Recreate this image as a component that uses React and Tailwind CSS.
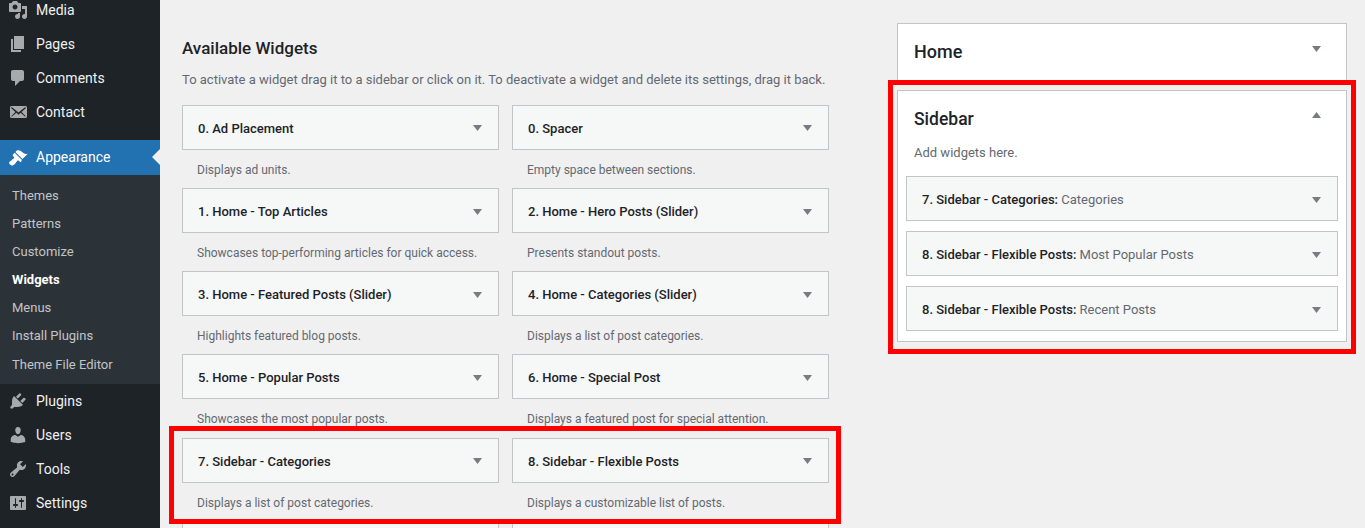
const icons = {
  media: "M13 11V4c0-.55-.45-1-1-1h-1.67L9 1H5L3.67 3H2c-.55 0-1 .45-1 1v7c0 .55.45 1 1 1h10c.55 0 1-.45 1-1zM7 4.5c1.38 0 2.5 1.12 2.5 2.5S8.38 9.5 7 9.5 4.5 8.38 4.5 7 5.62 4.5 7 4.5zM14 6h5v10.5c0 1.38-1.12 2.5-2.5 2.5S14 17.88 14 16.5s1.12-2.5 2.5-2.5c.17 0 .34.02.5.05V9h-3V6zm-4 8.05V13h2v3.5c0 1.38-1.12 2.5-2.5 2.5S7 17.88 7 16.5 8.12 14 9.5 14c.17 0 .34.02.5.05z",
  pages: "M6 15V2h10v13H6zm-1 1h8v2H3V5h2v11z",
  comments: "M5 2h9c1.1 0 2 .9 2 2v7c0 1.1-.9 2-2 2h-2l-5 5v-5H5c-1.1 0-2-.9-2-2V4c0-1.1.9-2 2-2z",
  contact: "M19 14.5v-9c0-.83-.67-1.5-1.5-1.5H3.49c-.83 0-1.5.67-1.5 1.5v9c0 .83.67 1.5 1.5 1.5H17.5c.83 0 1.5-.67 1.5-1.5zm-1.31-9.11c.33.33.15.67-.03.84L13.6 9.95l3.9 4.06c.12.14.2.36.06.51-.13.16-.43.15-.56.05l-4.37-3.73-2.14 1.95-2.13-1.95-4.37 3.73c-.13.1-.43.11-.56-.05-.14-.15-.06-.37.06-.51l3.9-4.06-4.06-3.72c-.18-.17-.36-.51-.03-.84s.67-.17.95.07l6.24 5.04 6.25-5.04c.28-.24.62-.4.95-.07z",
  appearance: "M14.48 11.06L7.41 3.99l1.5-1.5c.5-.56 2.3-.47 3.51.32 1.21.8 1.43 1.28 2.91 2.1 1.18.64 2.45 1.26 4.45.85zm-.71.71L6.7 4.7 4.93 6.47c-.39.39-.39 1.02 0 1.41l1.06 1.06c.39.39.39 1.03 0 1.42-.6.6-1.43 1.11-2.21 1.69-.35.26-.7.53-1.01.84C1.43 13.23.4 14.89 2.12 16.6c1.72 1.72 3.36.69 4.7-.65.31-.31.58-.66.84-1.01.58-.78 1.09-1.61 1.69-2.21.39-.39 1.03-.39 1.42 0l1.06 1.06c.39.39 1.02.39 1.41 0z",
  plugins: "M13.11 4.36L9.87 7.6 8 5.73l3.24-3.24c.35-.34 1.05-.2 1.56.32.52.51.66 1.21.31 1.55zm-8 1.77l.91-1.12 9.01 9.01-1.19.84c-.71.71-2.63 1.16-3.82 1.16H6.14L4.9 17.26c-.59.59-1.54.59-2.12 0-.59-.58-.59-1.53 0-2.12l1.24-1.24v-3.88c0-1.13.4-3.19 1.09-3.89zm7.26 3.97l3.24-3.24c.34-.35 1.04-.21 1.55.31.52.51.66 1.21.31 1.55l-3.24 3.25z",
  users: "M10 9.25c-2.27 0-2.73-3.44-2.73-3.44C7 4.02 7.82 2 9.97 2c2.16 0 2.98 2.02 2.71 3.81 0 0-.41 3.44-2.68 3.44zm0 2.57L12.72 10c2.39 0 4.52 2.33 4.52 4.53v2.49s-3.65 1.13-7.24 1.13c-3.65 0-7.24-1.13-7.24-1.13v-2.49c0-2.25 1.94-4.48 4.47-4.48z",
  tools: "M16.68 9.77c-1.34 1.34-3.3 1.67-4.95.99l-5.41 6.52c-.99.99-2.59.99-3.58 0s-.99-2.59 0-3.57l6.52-5.42c-.68-1.65-.35-3.61.99-4.95 1.28-1.28 3.12-1.62 4.72-1.06l-2.89 2.89 2.82 2.82 2.86-2.87c.53 1.58.18 3.39-1.08 4.65zM3.81 16.21c.4.39 1.04.39 1.43 0 .4-.4.4-1.04 0-1.43-.39-.4-1.03-.4-1.43 0-.39.39-.39 1.03 0 1.43z",
  settings: "M18 16V4c0-.55-.45-1-1-1H3c-.55 0-1 .45-1 1v12c0 .55.45 1 1 1h14c.55 0 1-.45 1-1zM8 11h1c.55 0 1 .45 1 1s-.45 1-1 1H8v1.5c0 .28-.22.5-.5.5s-.5-.22-.5-.5V13H6c-.55 0-1-.45-1-1s.45-1 1-1h1V5.5c0-.28.22-.5.5-.5s.5.22.5.5V11zm5-2h-1c-.55 0-1-.45-1-1s.45-1 1-1h1V5.5c0-.28.22-.5.5-.5s.5.22.5.5V7h1c.55 0 1 .45 1 1s-.45 1-1 1h-1v5.5c0 .28-.22.5-.5.5s-.5-.22-.5-.5V9z",
};

const widgets = [
  ["0. Ad Placement", "Displays ad units."],
  ["0. Spacer", "Empty space between sections."],
  ["1. Home - Top Articles", "Showcases top-performing articles for quick access."],
  ["2. Home - Hero Posts (Slider)", "Presents standout posts."],
  ["3. Home - Featured Posts (Slider)", "Highlights featured blog posts."],
  ["4. Home - Categories (Slider)", "Displays a list of post categories."],
  ["5. Home - Popular Posts", "Showcases the most popular posts."],
  ["6. Home - Special Post", "Displays a featured post for special attention."],
  ["7. Sidebar - Categories", "Displays a list of post categories."],
  ["8. Sidebar - Flexible Posts", "Displays a customizable list of posts."],
  ["", ""],
  ["", ""],
];

const submenu = ["Themes", "Patterns", "Customize", "Widgets", "Menus", "Install Plugins", "Theme File Editor"];

function MenuRow({ icon, label }) {
  return (
    <div className="flex h-[34px] items-center text-[14px] text-[#f0f0f1]">
      <svg viewBox="0 0 20 20" className="ml-[8px] h-[20px] w-[20px] fill-[#a7aaad]">
        <path d={icons[icon]} />
      </svg>
      <span className="ml-[8px]">{label}</span>
    </div>
  );
}

function Arrow({ up }) {
  return (
    <svg viewBox="0 0 9 6" className={`h-[6px] w-[9px] fill-[#787c82] ${up ? "rotate-180" : ""}`}>
      <path d="M0 0h9L4.5 6z" />
    </svg>
  );
}

function SavedWidget({ name, title }) {
  return (
    <div className="flex h-[45px] items-center justify-between border border-[#c3c4c7] bg-[#f6f7f7] pl-[15px] pr-[16px] pt-[2px] text-[13px]">
      <div>
        <span className="font-medium text-[#1d2327]">{name}:</span>{" "}
        <span className="text-[#646970]">{title}</span>
      </div>
      <Arrow />
    </div>
  );
}

export default function App() {
  return (
    <div className="relative flex h-[528px] w-[1365px] overflow-hidden bg-[#f0f0f1] font-['Roboto',sans-serif]">
      {/* admin menu, scrolled a little */}
      <aside className="-mt-[7px] w-[160px] shrink-0 bg-[#1d2327]">
        <MenuRow icon="media" label="Media" />
        <MenuRow icon="pages" label="Pages" />
        <MenuRow icon="comments" label="Comments" />
        <MenuRow icon="contact" label="Contact" />
        <div className="h-[11px]" />
        <div className="relative flex h-[35px] items-center bg-[#2271b1] text-[14px] text-white">
          <svg viewBox="0 0 20 20" className="ml-[8px] h-[20px] w-[20px] fill-white">
            <path d={icons.appearance} />
          </svg>
          <span className="ml-[8px]">Appearance</span>
          <div className="absolute right-0 top-[9px] h-0 w-0 border-y-[8px] border-r-[8px] border-y-transparent border-r-[#f0f0f1]" />
        </div>
        <div className="h-[209px] bg-[#2c3338] pt-[7px]">
          {submenu.map((item) => (
            <div
              key={item}
              className={`flex h-[28px] items-center pl-[12px] text-[13px] ${
                item === "Widgets" ? "font-bold text-white" : "text-[#c3c4c7]"
              } ${item === "Theme File Editor" ? "mt-[1px]" : ""}`}
            >
              {item}
            </div>
          ))}
        </div>
        <MenuRow icon="plugins" label="Plugins" />
        <MenuRow icon="users" label="Users" />
        <MenuRow icon="tools" label="Tools" />
        <MenuRow icon="settings" label="Settings" />
      </aside>

      <main className="flex flex-1 pl-[22px]">
        {/* available widgets */}
        <section className="w-[647px] shrink-0 pt-[37px]">
          <h2 className="text-[17px] font-medium leading-[22px] text-[#1d2327]">Available Widgets</h2>
          <p className="mt-[11px] whitespace-nowrap text-[13px] leading-[20px] text-[#646970]">
            To activate a widget drag it to a sidebar or click on it. To deactivate a widget and delete its settings, drag it back.
          </p>
          <div className="mt-[14.6px] grid grid-cols-[317px_317px] auto-rows-[83.25px] gap-x-[13px]">
            {widgets.map(([title, desc], i) => (
              <div key={i}>
                <div className="flex h-[45px] items-center justify-between border border-[#c3c4c7] bg-[#f6f7f7] pl-[15px] pr-[16px] pt-[2.6px] text-[13px] font-medium text-[#1d2327]">
                  {title}
                  <Arrow />
                </div>
                <p className="mt-[10px] pl-[15px] text-[12px] leading-[20px] text-[#646970]">{desc}</p>
              </div>
            ))}
          </div>
        </section>

        {/* widget areas */}
        <section className="ml-[68px] w-[450px] shrink-0 pt-[23px]">
          <div className="flex h-[58px] items-start justify-between border border-b-0 border-[#c3c4c7] bg-white pl-[16px] pr-[25px] pt-[15px]">
            <h3 className="text-[18px] font-medium leading-[26px] text-[#1d2327]">Home</h3>
            <div className="pt-[7px]">
              <Arrow />
            </div>
          </div>
          <div className="mt-[9px] h-[252px] border border-[#c3c4c7] bg-white px-[8px] pt-[15px]">
            <div className="flex items-start justify-between pl-[8px] pr-[17px]">
              <h3 className="text-[17.5px] font-medium leading-[26px] text-[#1d2327]">Sidebar</h3>
              <div className="pt-[6px]">
                <Arrow up />
              </div>
            </div>
            <p className="mt-[11px] pl-[8px] text-[13px] leading-[20px] text-[#646970]">Add widgets here.</p>
            <div className="mt-[13px] flex flex-col gap-[10px]">
              <SavedWidget name="7. Sidebar - Categories" title="Categories" />
              <SavedWidget name="8. Sidebar - Flexible Posts" title="Most Popular Posts" />
              <SavedWidget name="8. Sidebar - Flexible Posts" title="Recent Posts" />
            </div>
          </div>
        </section>
      </main>

      {/* red annotation boxes */}
      <div className="absolute left-[169px] top-[426px] h-[98px] w-[672px] border-[5px] border-[#ff0000]" />
      <div className="absolute left-[888px] top-[80px] h-[274px] w-[468px] border-[5px] border-[#ff0000]" />
    </div>
  );
}
